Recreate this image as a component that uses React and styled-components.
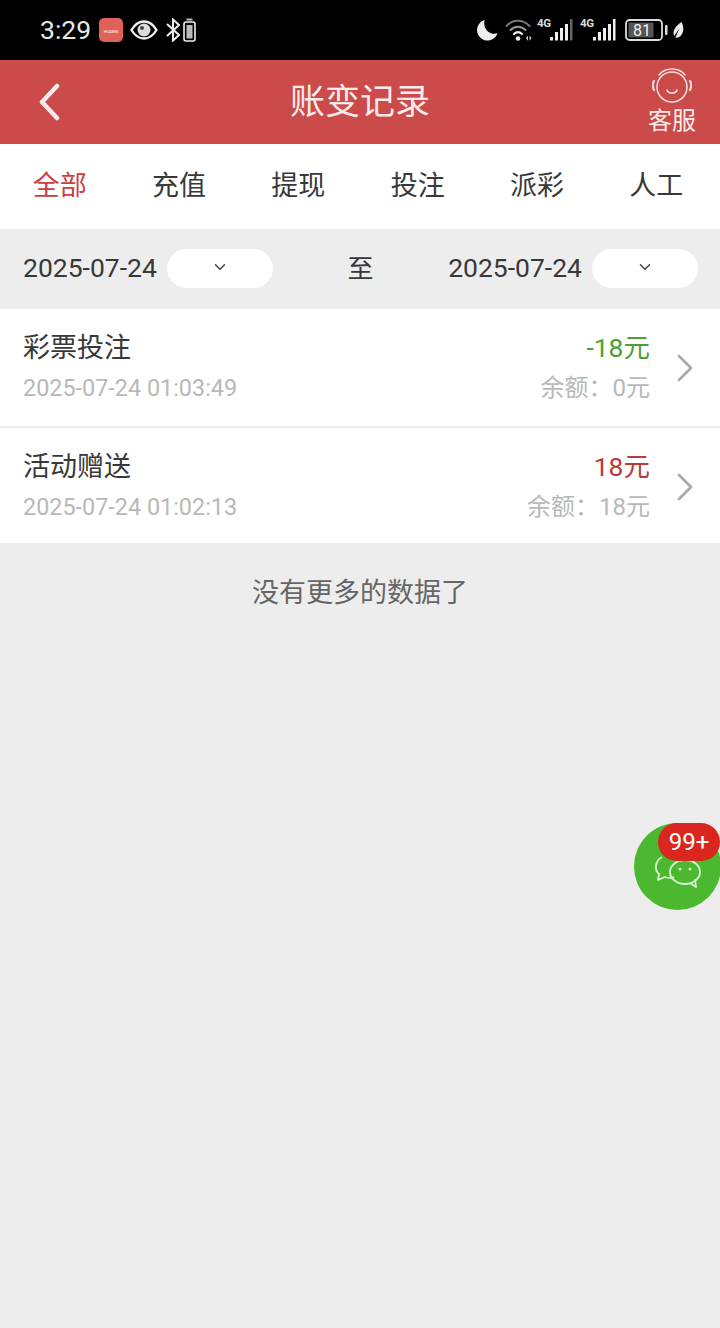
import React from 'react'
import styled, { createGlobalStyle } from 'styled-components'
import { ChevronRight, ChevronDown } from 'lucide-react'

const GlobalStyle = createGlobalStyle`
    html, body {
        margin: 0;
        padding: 0;
        background-color: #ededed;
        font-family: Roboto, "Noto Sans CJK SC", sans-serif;
    }
    * {
        box-sizing: border-box;
    }
`

const Page = styled.div`
    position: relative;
    width: 720px;
    height: 1328px;
    overflow: hidden;
    background-color: #ededed;
`

const StatusBar = styled.div`
    height: 60px;
    background-color: #000;
    color: #eee;
    display: flex;
    align-items: center;
    justify-content: space-between;
    padding: 0 35px 0 40px;
`

const StatusGroup = styled.div`
    display: flex;
    align-items: center;
`

const Slot = styled.span`
    display: flex;
    margin-left: ${(p) => p.$left || 0}px;
`

const Clock = styled.span`
    font-size: 26.5px;
    line-height: 1;
    color: #e8e8e8;
`

const AppBadge = styled.div`
    width: 24px;
    height: 24px;
    border-radius: 5px;
    background-color: #e0605a;
    color: #fff;
    display: flex;
    flex-direction: column;
    align-items: center;
    justify-content: center;
`

const AppBadgeText = styled.span`
    font-size: 4px;
    line-height: 5px;
    margin-top: 2px;
`

const Header = styled.header`
    height: 84px;
    background-color: #cb4a4a;
    color: #fbeaea;
    display: flex;
    align-items: center;
    justify-content: space-between;
    padding: 0 24px 0 28px;
`

const BackButton = styled.div`
    width: 44px;
    display: flex;
    justify-content: center;
`

const Title = styled.h1`
    margin: 0;
    font-size: 35px;
    font-weight: 400;
    line-height: 1;
`

const Service = styled.div`
    width: 48px;
    margin-top: -2px;
    display: flex;
    flex-direction: column;
    align-items: center;
    gap: 4px;
    font-size: 24px;
    line-height: 26px;
`

const Tabs = styled.nav`
    height: 85px;
    padding: 0 4px 6px 0;
    background-color: #fff;
    display: grid;
    grid-template-columns: repeat(6, 1fr);
    align-items: center;
    text-align: center;
`

const Tab = styled.span`
    font-size: 27px;
    color: ${(p) => (p.$active ? '#c8413f' : '#383838')};
`

const DateBar = styled.div`
    height: 80px;
    display: flex;
    align-items: center;
    justify-content: space-between;
    padding: 0 22px 2px 23px;
`

const DateField = styled.div`
    display: flex;
    align-items: center;
    gap: 10px;
`

const DateText = styled.span`
    font-size: 26.5px;
    margin-bottom: 2px;
    color: #383838;
`

const DatePicker = styled.div`
    width: 106px;
    height: 39px;
    border-radius: 20px;
    background-color: #fff;
    color: #444;
    display: flex;
    align-items: center;
    justify-content: center;
    padding-bottom: 3px;
`

const To = styled.span`
    font-size: 26px;
    margin-bottom: 3px;
    color: #383838;
`

const Row = styled.div`
    height: ${(p) => p.$height}px;
    background-color: #fff;
    display: flex;
    align-items: center;
    justify-content: space-between;
    padding: ${(p) => p.$top || 0}px 11px 0 23px;
    margin-bottom: ${(p) => p.$gap || 0}px;
`

const Left = styled.div`
    display: flex;
    flex-direction: column;
    gap: 8px;
`

const Right = styled.div`
    display: flex;
    flex-direction: column;
    align-items: flex-end;
    gap: 8px;
    margin-left: auto;
    margin-right: 11px;
`

const RowTitle = styled.span`
    font-size: 27px;
    line-height: 32px;
    color: #383838;
`

const Time = styled.span`
    font-size: 23.4px;
    line-height: 32px;
    color: #b8b8b8;
`

const Balance = styled.span`
    font-size: 24px;
    line-height: 32px;
    color: #b8b8b8;
`

const Amount = styled.span`
    font-size: 26.5px;
    line-height: 32px;
    color: ${(p) => (p.$minus ? '#4f9e33' : '#b93a3a')};
`

const Arrow = styled(ChevronRight)`
    color: #aaa;
`

const NoMore = styled.div`
    margin-top: 31px;
    text-align: center;
    font-size: 27px;
    line-height: 38px;
    color: #666;
`

const Float = styled.div`
    position: absolute;
    left: 634px;
    top: 823px;
    width: 87px;
    height: 87px;
    padding-top: 8px;
    border-radius: 50%;
    background-color: #4cb82f;
    display: flex;
    align-items: center;
    justify-content: center;
`

const Badge = styled.span`
    position: absolute;
    left: 24px;
    top: 0;
    width: 62px;
    height: 38px;
    border-radius: 19px;
    background-color: #d9271f;
    color: #fff;
    font-size: 24px;
    line-height: 38px;
    text-align: center;
`

const EyeIcon = () => (
    <svg width="28" height="22" viewBox="0 0 28 22" fill="none">
        <path d="M1.5 11C5 5 9 2.500 14 2.500S23 5 26.500 11C23 17 19 19.500 14 19.500S5 17 1.500 11Z" stroke="#eee" strokeWidth="2.400" />
        <circle cx="14" cy="11" r="6.500" fill="#ddd" />
        <circle cx="12" cy="9" r="2" fill="#444" />
    </svg>
)

const BluetoothIcon = () => (
    <svg width="14" height="24" viewBox="0 0 14 24" fill="none" stroke="#eee" strokeWidth="2">
        <path d="M1 6L13 17L7 22.500V1.500L13 7L1 18" />
    </svg>
)

const SmallBattery = () => (
    <svg width="13" height="24" viewBox="0 0 13 24" fill="none">
        <rect x="3.500" y="0.500" width="6" height="2" fill="#bbb" />
        <rect x="1" y="4" width="11" height="19" rx="2" stroke="#eee" strokeWidth="1.600" />
        <rect x="3.500" y="7" width="6" height="13.500" fill="#bbb" />
    </svg>
)

const MoonIcon = () => (
    <svg width="21" height="22" viewBox="0 0 22 22">
        <path d="M8 0.500A11 11 0 1 0 21.500 14.500C14 17 5.500 10 8 0.500Z" fill="#eee" />
    </svg>
)

const WifiIcon = () => (
    <svg width="28" height="23" viewBox="0 0 28 23" fill="none" strokeLinecap="round">
        <path d="M1.500 7C8 0 18 0 24.500 7" stroke="#777" strokeWidth="2" />
        <path d="M5.500 11C10 6.500 16 6.500 20.500 11" stroke="#999" strokeWidth="2" />
        <path d="M9 15C11.500 12.500 14.500 12.500 17 15" stroke="#eee" strokeWidth="2.200" />
        <circle cx="13" cy="19.500" r="2.300" fill="#eee" />
        <path d="M21 19L23 16.500V22ZM24.500 16.500L26.500 19L24.500 22Z" fill="#ccc" />
    </svg>
)

const Signal = ({ muted }) => (
    <svg width="36" height="28" viewBox="0 -2 36 28">
        <text x="0" y="9" fontSize="11.500" fontWeight="700" fill="#ddd" fontFamily="Roboto" textLength="14">4G</text>
        <rect x="13" y="19" width="3" height="3.500" fill="#eee" />
        <rect x="18" y="14" width="3" height="8.500" fill="#eee" />
        <rect x="23" y="10" width="3" height="12.500" fill="#eee" />
        <rect x="28" y="6" width="3" height="16.500" fill="#eee" />
        <rect x="33" y="1" width="2.500" height="21.500" fill={muted ? '#666' : '#eee'} />
    </svg>
)

const BatteryIcon = () => (
    <svg width="43" height="24" viewBox="0 0 43 24">
        <rect x="1" y="2" width="36" height="20" rx="3.500" fill="none" stroke="#ddd" strokeWidth="1.800" />
        <rect x="3.500" y="4.500" width="25" height="15" rx="1" fill="#555" />
        <text x="8" y="17.500" fontSize="16" fill="#eee" fontFamily="Roboto">81</text>
        <rect x="40" y="7" width="2.500" height="10" rx="1" fill="#ddd" />
    </svg>
)

const LeafIcon = () => (
    <svg width="13" height="18" viewBox="0 0 12 18">
        <path d="M9 1C11.500 6 11.500 11 8.500 14.500C7 16.500 4 17 3 16.500L7 7L1.800 15C-0.500 10 3 5 9 1Z" fill="#eee" />
    </svg>
)

const BackIcon = () => (
    <svg width="22" height="38" viewBox="0 0 22 38" fill="none" stroke="#fbeaea" strokeWidth="4.500" strokeLinecap="round" strokeLinejoin="round">
        <path d="M18 3L3 19L18 35" />
    </svg>
)

const ServiceIcon = () => (
    <svg width="40" height="36" viewBox="0 0 40 36" fill="none" stroke="#f6dede" strokeLinecap="round">
        <circle cx="20" cy="19" r="15" strokeWidth="1.500" />
        <path d="M7 7C13 -1 27 -1 33 7" strokeWidth="1.500" />
        <path d="M2 13C0.500 15.500 0.500 19 2 22M38 13C39.500 15.500 39.500 19 38 22" strokeWidth="2.200" />
        <path d="M15 22C16 26 24 26 25 22" strokeWidth="1.600" />
    </svg>
)

const ChatIcon = () => (
    <svg width="48" height="36" viewBox="0 0 48 36" fill="none" stroke="#d8f5cf" strokeWidth="1.800" strokeLinejoin="round">
        <path d="M8 4C1 8 0 17 5 21L4 27L11 24C14 25 18 25 20 24" />
        <ellipse cx="31" cy="19" rx="15" ry="12" />
        <path d="M36 30L42 34L41 26" />
        <circle cx="26" cy="16" r="1.500" fill="#d8f5cf" stroke="none" />
        <circle cx="36" cy="16" r="1.500" fill="#d8f5cf" stroke="none" />
    </svg>
)

const tabs = ['全部', '充值', '提现', '投注', '派彩', '人工']

const records = [
    { title: '彩票投注', time: '2025-07-24 01:03:49', amount: '-18元', balance: '余额：0元', minus: true, height: 117, gap: 2 },
    { title: '活动赠送', time: '2025-07-24 01:02:13', amount: '18元', balance: '余额：18元', height: 115, top: 2 },
]

const App = () => {
    return (
        <Page>
            <GlobalStyle />
            <StatusBar>
                <StatusGroup>
                    <Clock>3:29</Clock>
                    <Slot $left={8}>
                        <AppBadge>
                            <AppBadgeText>HUAWEI</AppBadgeText>
                        </AppBadge>
                    </Slot>
                    <Slot $left={7}><EyeIcon /></Slot>
                    <Slot $left={8}><BluetoothIcon /></Slot>
                    <Slot $left={3}><SmallBattery /></Slot>
                </StatusGroup>
                <StatusGroup>
                    <Slot><MoonIcon /></Slot>
                    <Slot $left={7}><WifiIcon /></Slot>
                    <Slot $left={4}><Signal muted /></Slot>
                    <Slot $left={7}><Signal /></Slot>
                    <Slot $left={9}><BatteryIcon /></Slot>
                    <Slot $left={4}><LeafIcon /></Slot>
                </StatusGroup>
            </StatusBar>
            <Header>
                <BackButton><BackIcon /></BackButton>
                <Title>账变记录</Title>
                <Service>
                    <ServiceIcon />
                    客服
                </Service>
            </Header>
            <Tabs>
                {tabs.map((item, index) => (
                    <Tab key={item} $active={index === 0}>{item}</Tab>
                ))}
            </Tabs>
            <DateBar>
                <DateField>
                    <DateText>2025-07-24</DateText>
                    <DatePicker><ChevronDown size={18} strokeWidth={2} /></DatePicker>
                </DateField>
                <To>至</To>
                <DateField>
                    <DateText>2025-07-24</DateText>
                    <DatePicker><ChevronDown size={18} strokeWidth={2} /></DatePicker>
                </DateField>
            </DateBar>
            {records.map((item) => (
                <Row key={item.time} $height={item.height} $gap={item.gap} $top={item.top}>
                    <Left>
                        <RowTitle>{item.title}</RowTitle>
                        <Time>{item.time}</Time>
                    </Left>
                    <Right>
                        <Amount $minus={item.minus}>{item.amount}</Amount>
                        <Balance>{item.balance}</Balance>
                    </Right>
                    <Arrow size={48} strokeWidth={1.4} />
                </Row>
            ))}
            <NoMore>没有更多的数据了</NoMore>
            <Float>
                <ChatIcon />
                <Badge>99+</Badge>
            </Float>
        </Page>
    )
}

export default App
